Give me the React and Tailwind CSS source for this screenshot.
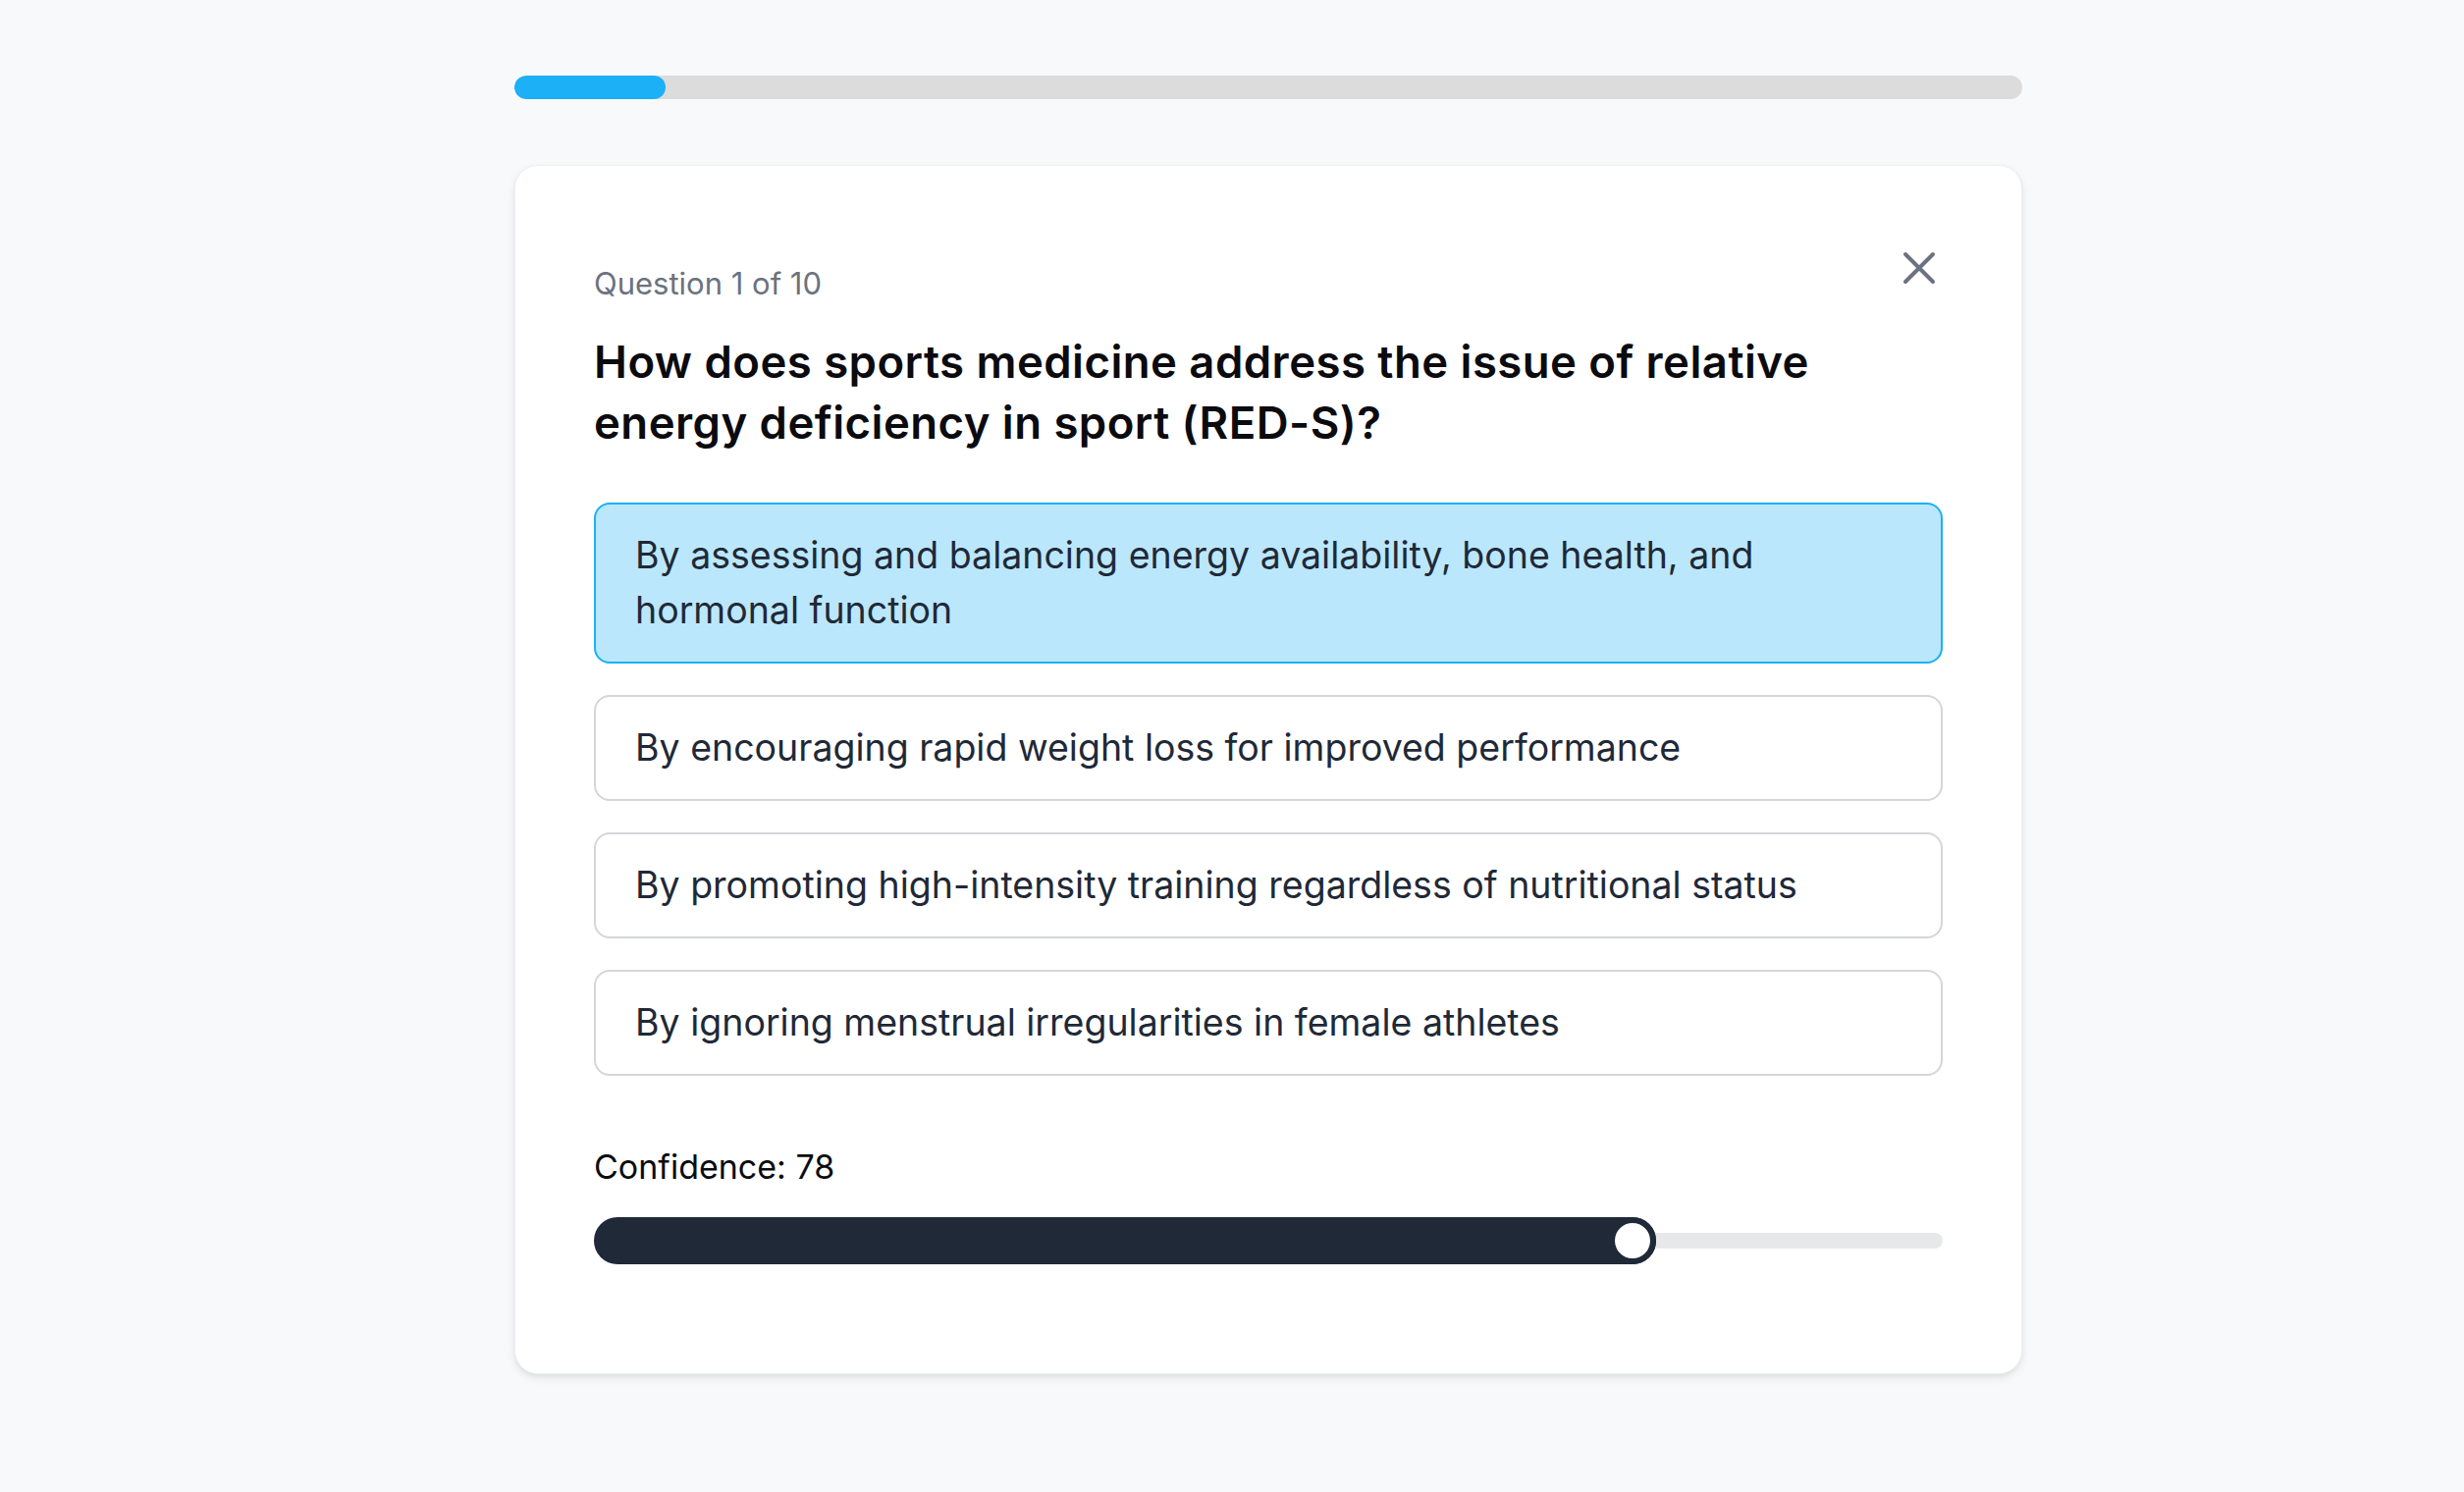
import { useState } from "react";

const options = [
  "By assessing and balancing energy availability, bone health, and hormonal function",
  "By encouraging rapid weight loss for improved performance",
  "By promoting high-intensity training regardless of nutritional status",
  "By ignoring menstrual irregularities in female athletes",
];

export default function App() {
  const [selected, setSelected] = useState(0);
  const confidence = 78;

  return (
    <div
      className="min-h-screen w-full bg-[#f8f9fb] pt-[77px]"
      style={{ fontFamily: "Inter, 'Noto Sans', sans-serif" }}
    >
      <div className="ml-[524px] w-[1536px]">
        {/* progress */}
        <div className="h-[24px] w-full rounded-full bg-[#dcdcdc] overflow-hidden">
          <div className="h-full w-[10%] rounded-full bg-[#1cb0f6]" />
        </div>

        {/* card */}
        <div className="relative mt-[67px] rounded-[24px] bg-white shadow-[0_4px_10px_rgba(0,0,0,0.08),0_2px_4px_rgba(0,0,0,0.04)] border border-[#eef0f3] px-[80px] pt-[100px] pb-[111px]">
          <button className="absolute right-[80px] top-[80px] flex h-[48px] w-[48px] items-center justify-center text-[#6b7280]">
            <svg width="48" height="48" viewBox="0 0 48 48" fill="none">
              <path
                d="M10 10L38 38M38 10L10 38"
                stroke="currentColor"
                strokeWidth="4"
                strokeLinecap="round"
              />
            </svg>
          </button>

          <p className="text-[31px] leading-[40px] text-[#6b7280]">
            Question 1 of 10
          </p>
          <h2 className="mt-[29px] w-[1300px] text-[45.5px] leading-[62px] font-semibold tracking-[0.01em] text-[#0b0b0f]">
            How does sports medicine address the issue of relative energy deficiency in sport (RED-S)?
          </h2>

          <div className="mt-[50px] flex flex-col gap-[32px]">
            {options.map((opt, i) => (
              <button
                key={i}
                onClick={() => setSelected(i)}
                className={
                  i === selected
                    ? "w-full rounded-[16px] border-2 border-[#1cb0f6] bg-[#bbe7fd] px-[40px] py-[24px] text-left text-[37.5px] leading-[56px] text-[#1f2937]"
                    : "w-full rounded-[16px] border-2 border-[#d4d6da] bg-white px-[40px] py-[24px] text-left text-[37.5px] leading-[56px] text-[#1f2937]"
                }
              >
                {opt}
              </button>
            ))}
          </div>

          <p className="mt-[69px] text-[34px] leading-[48px] text-[#0b0b0f]">
            Confidence: {confidence}
          </p>

          {/* slider */}
          <div className="relative mt-[27px] h-[48px] w-full">
            <div className="absolute left-0 right-0 top-[16px] h-[16px] rounded-full bg-[#e7e8ea]" />
            <div
              className="absolute left-0 top-0 h-[48px] rounded-full bg-[#1f2937]"
              style={{ width: `calc(${confidence / 100} * (100% - 48px) + 48px)` }}
            />
            <div
              className="absolute top-0 h-[48px] w-[48px] rounded-full border-[6px] border-[#1f2937] bg-white"
              style={{ left: `calc(${confidence / 100} * (100% - 48px))` }}
            />
          </div>
        </div>
      </div>
    </div>
  );
}
